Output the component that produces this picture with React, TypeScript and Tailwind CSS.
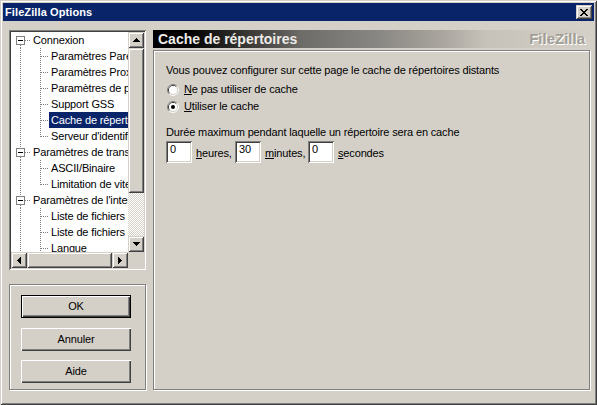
import clsx from "clsx";

const raised =
  "shadow-[inset_1px_1px_#d4d0c8,inset_-1px_-1px_#404040,inset_2px_2px_#ffffff,inset_-2px_-2px_#808080]";
const push = "shadow-[inset_1px_1px_#ffffff,inset_-1px_-1px_#404040,inset_-2px_-2px_#808080]";
const sunken =
  "shadow-[inset_1px_1px_#808080,inset_-1px_-1px_#ffffff,inset_2px_2px_#404040,inset_-2px_-2px_#d4d0c8]";
const etched = "border border-[#808080] shadow-[1px_1px_0_#ffffff,inset_1px_1px_0_#ffffff]";
const checker =
  "[background-image:repeating-conic-gradient(#ffffff_0_25%,#d4d0c8_0_50%)] [background-size:2px_2px]";

type Item = { t: string; lvl: 0 | 1; first?: boolean; last?: boolean; sel?: boolean };

const tree: Item[] = [
  { t: "Connexion", lvl: 0, first: true },
  { t: "Paramètres Pare-feu", lvl: 1 },
  { t: "Paramètres Proxy", lvl: 1 },
  { t: "Paramètres de port", lvl: 1 },
  { t: "Support GSS", lvl: 1 },
  { t: "Cache de répertoires", lvl: 1, sel: true },
  { t: "Serveur d'identification", lvl: 1, last: true },
  { t: "Paramètres de transfert", lvl: 0 },
  { t: "ASCII/Binaire", lvl: 1 },
  { t: "Limitation de vitesse", lvl: 1, last: true },
  { t: "Paramètres de l'interface", lvl: 0 },
  { t: "Liste de fichiers locaux", lvl: 1 },
  { t: "Liste de fichiers distants", lvl: 1 },
  { t: "Langue", lvl: 1 },
];

function Arrow({ dir }: { dir: "up" | "down" | "left" | "right" }) {
  const rows = [0, 1, 2, 3];
  const vertical = dir === "up" || dir === "down";
  return (
    <svg width={vertical ? 7 : 4} height={vertical ? 4 : 7} shapeRendering="crispEdges">
      {rows.map((i) => {
        const k = dir === "up" || dir === "left" ? i : 3 - i;
        return vertical ? (
          <rect key={i} x={3 - k} y={i} width={1 + 2 * k} height={1} fill="#000" />
        ) : (
          <rect key={i} x={i} y={3 - k} width={1} height={1 + 2 * k} fill="#000" />
        );
      })}
    </svg>
  );
}

function ScrollBtn({ dir }: { dir: "up" | "down" | "left" | "right" }) {
  return (
    <div className={clsx("flex h-[16px] w-[16px] shrink-0 items-center justify-center bg-[#d4d0c8]", raised)}>
      <Arrow dir={dir} />
    </div>
  );
}

function TreeRow({ item }: { item: Item }) {
  const dot = { stroke: "#808080", strokeDasharray: "1 1" };
  return (
    <div className="flex h-[16px] items-center">
      {item.lvl === 0 ? (
        <svg width={20} height={16} className="shrink-0" shapeRendering="crispEdges">
          {!item.first && <line x1={9.5} y1={0} x2={9.5} y2={4} {...dot} />}
          <line x1={9.5} y1={13} x2={9.5} y2={16} {...dot} />
          <rect x={5.5} y={4.5} width={8} height={8} fill="#fff" stroke="#808080" />
          <rect x={7} y={8} width={5} height={1} fill="#000" />
          <line x1={14} y1={8.5} x2={20} y2={8.5} {...dot} />
        </svg>
      ) : (
        <svg width={38} height={16} className="shrink-0" shapeRendering="crispEdges">
          <line x1={9.5} y1={0} x2={9.5} y2={16} {...dot} />
          <line x1={29.5} y1={0} x2={29.5} y2={item.last ? 9 : 16} {...dot} />
          <line x1={30} y1={8.5} x2={38} y2={8.5} {...dot} />
        </svg>
      )}
      <span
        className={clsx(
          "whitespace-nowrap px-[2px] leading-[16px]",
          item.sel ? "bg-[#0a246a] text-white" : "text-black"
        )}
      >
        {item.t}
      </span>
    </div>
  );
}

function Radio({ checked }: { checked?: boolean }) {
  return (
    <svg width={12} height={12} className="shrink-0">
      <path d="M2.11 9.89 A5.5 5.5 0 0 1 9.89 2.11" fill="none" stroke="#808080" />
      <path d="M9.89 2.11 A5.5 5.5 0 0 1 2.11 9.89" fill="none" stroke="#ffffff" />
      <path d="M2.82 9.18 A4.5 4.5 0 0 1 9.18 2.82" fill="none" stroke="#404040" />
      <path d="M9.18 2.82 A4.5 4.5 0 0 1 2.82 9.18" fill="none" stroke="#d4d0c8" />
      <circle cx={6} cy={6} r={4} fill="#fff" />
      {checked && <circle cx={6} cy={6} r={2} fill="#000" />}
    </svg>
  );
}

function Field({ value }: { value: string }) {
  return (
    <div className={clsx("h-[22px] w-[26px] shrink-0 bg-white pl-[4px] pt-[2px] leading-[13px]", sunken)}>
      {value}
    </div>
  );
}

function Button({ label, def }: { label: string; def?: boolean }) {
  return (
    <div
      className={clsx(
        "flex h-[23px] w-[110px] items-center justify-center bg-[#d4d0c8]",
        def ? "border border-black" : "",
        push
      )}
    >
      {label}
    </div>
  );
}

export default function App() {
  return (
    <div
      className={clsx(
        "flex h-[405px] w-[597px] flex-col bg-[#d4d0c8] p-[3px] text-[11px] tracking-[-0.15px] text-black [font-family:'Liberation_Sans',Arial,sans-serif]",
        raised
      )}
    >
      <div className="flex h-[18px] shrink-0 items-center justify-between bg-[#0a246a] pl-[2px] pr-[2px]">
        <span className="text-[11px] font-bold tracking-[0.1px] text-white">FileZilla Options</span>
        <div className={clsx("flex h-[14px] w-[16px] items-center justify-center bg-[#d4d0c8]", raised)}>
          <svg width={8} height={7} shapeRendering="crispEdges">
            {[0, 1, 2, 3, 4, 5, 6].map((r) => {
              const d = Math.min(r, 6 - r);
              return (
                <g key={r} fill="#000">
                  <rect x={d} y={r} width={2} height={1} />
                  <rect x={6 - d} y={r} width={2} height={1} />
                </g>
              );
            })}
          </svg>
        </div>
      </div>

      <div className="flex flex-1 pl-[6px] pt-[9px]">
        <div className="flex w-[137px] shrink-0 flex-col">
          <div className={clsx("flex h-[240px] flex-col bg-[#d4d0c8] p-[2px]", sunken)}>
            <div className="flex h-[220px]">
              <div className="flex-1 overflow-hidden bg-white">
                {tree.map((item) => (
                  <TreeRow key={item.t} item={item} />
                ))}
              </div>
              <div className="flex w-[16px] flex-col">
                <ScrollBtn dir="up" />
                <div className={clsx("h-[145px] bg-[#d4d0c8]", raised)} />
                <div className={clsx("flex-1", checker)} />
                <ScrollBtn dir="down" />
              </div>
            </div>
            <div className="flex h-[16px]">
              <ScrollBtn dir="left" />
              <div className={clsx("w-[85px] bg-[#d4d0c8]", raised)} />
              <div className={clsx("flex-1", checker)} />
              <ScrollBtn dir="right" />
              <div className="w-[16px] bg-[#d4d0c8]" />
            </div>
          </div>

          <div className={clsx("mt-[14px] flex h-[106px] flex-col items-start pl-[11px] pt-[10px]", etched)}>
            <Button label="OK" def />
            <div className="mt-[10px]">
              <Button label="Annuler" />
            </div>
            <div className="mt-[9px]">
              <Button label="Aide" />
            </div>
          </div>
        </div>

        <div className="ml-[7px] flex w-[437px] flex-col">
          <div className="flex h-[18px] items-center justify-between pl-[5px] pr-[5px] tracking-normal [background-image:linear-gradient(90deg,#000000_0%,#000000_8%,#3a3936_22%,#6e6c68_34%,#8a8884_52%,#a9a59e_66%,#c6c2ba_76%,#d4d0c8_100%)]">
            <span className="text-[14px] font-bold leading-[18px] text-[#eeece8]">Cache de répertoires</span>
            <span className="text-[15px] font-bold leading-[18px] text-[#a29e96] [text-shadow:1px_1px_0_#ffffff]">
              FileZilla
            </span>
          </div>
          <div className={clsx("mt-[2px] flex h-[340px] flex-col pl-[12px] pt-[13px] leading-[13px]", etched)}>
            <div>Vous pouvez configurer sur cette page le cache de répertoires distants</div>
            <div className="mt-[6px] flex h-[13px] items-center pl-[1px]">
              <Radio />
              <span className="ml-[5px]">
                <span className="underline">N</span>e pas utiliser de cache
              </span>
            </div>
            <div className="mt-[4px] flex h-[13px] items-center pl-[1px]">
              <Radio checked />
              <span className="ml-[5px]">
                <span className="underline">U</span>tiliser le cache
              </span>
            </div>
            <div className="mt-[13px]">Durée maximum pendant laquelle un répertoire sera en cache</div>
            <div className="mt-[2px] flex items-center">
              <Field value="0" />
              <span className="w-[43px] pl-[4px] pt-[2px]">
                <span className="underline">h</span>eures,
              </span>
              <Field value="30" />
              <span className="w-[47px] pl-[4px] pt-[2px]">
                <span className="underline">m</span>inutes,
              </span>
              <Field value="0" />
              <span className="pl-[4px] pt-[2px]">
                <span className="underline">s</span>econdes
              </span>
            </div>
          </div>
        </div>
      </div>
    </div>
  );
}
